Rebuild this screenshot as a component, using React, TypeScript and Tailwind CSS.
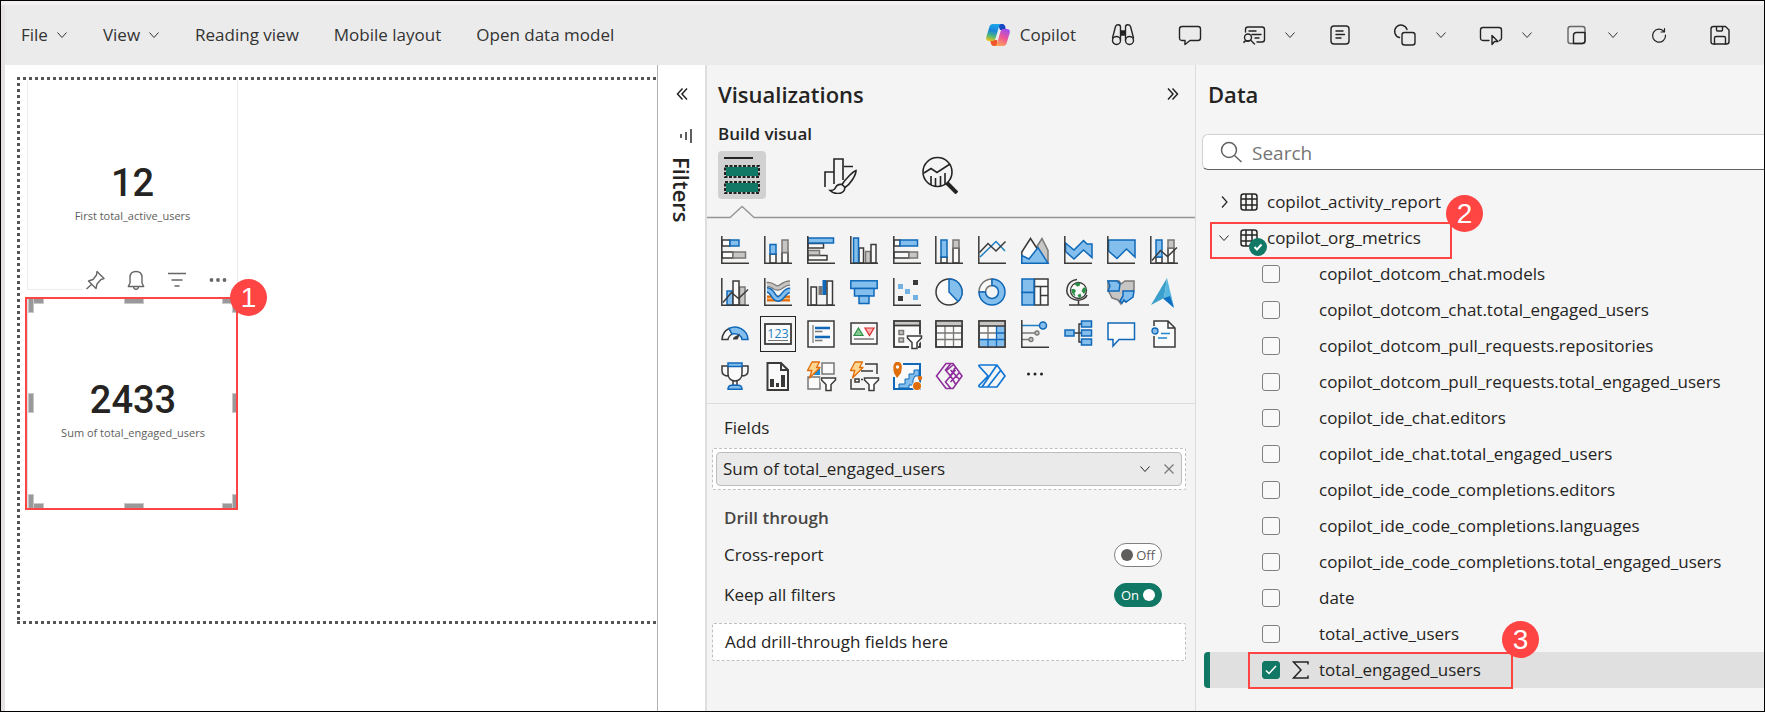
import React, { useState } from "react";

const D = "#3b3a39";
const B = "#0f68b8";
const LB = "#83beec";
const G = "#797775";
const LG = "#c8c6c4";
const W = "#fafafa";

type Kind = "w" | "b" | "g";
const STROKES: Record<Kind, string> = { w: D, b: B, g: G };
const FILLS: Record<Kind, string> = { w: W, b: LB, g: LG };

function Bar({ k, x, y, x2, y2 }: { k: Kind; x: number; y: number; x2: number; y2: number }) {
  return <rect x={x} y={y} width={x2 - x} height={y2 - y} fill={FILLS[k]} stroke={STROKES[k]} strokeWidth="1.5" />;
}

function Axis() {
  return <path d="M.8 0v27.2H28" fill="none" stroke={D} strokeWidth="1.5" />;
}

function Line({ d, c = D, w = 1.5, f = "none" }: { d: string; c?: string; w?: number; f?: string }) {
  return <path d={d} fill={f} stroke={c} strokeWidth={w} />;
}

function Funnel() {
  return (
    <>
      <path d="M13 14.500h17v5l-5 5v6h-9v-6l-3-5z" fill="#f4f4f4" />
      <path d="M15 16h13.500v2L24 22.500V28.500h-5v-6L14.500 18v-2z" fill="#fff" stroke={D} strokeWidth="1.500" />
    </>
  );
}

function Bolt() {
  return <path d="M5 0h7.500L9.500 5.500H13L2.500 16l2.300-7.500H.500z" fill="#ffd590" stroke="#df6d0a" strokeWidth="1.300" strokeLinejoin="round" />;
}

const VISUALS: { name: string; art: React.ReactNode }[] = [
  { name: "Stacked bar chart", art: <><Bar k="w" x={1} y={4} x2={9} y2={10} /><Bar k="b" x={9} y={4} x2={18} y2={10} /><Bar k="w" x={1} y={16} x2={12} y2={22} /><Bar k="g" x={12} y={16} x2={24.5} y2={22} /><Axis /></> },
  { name: "Stacked column chart", art: <><Bar k="w" x={6} y={18} x2={12} y2={27} /><Bar k="b" x={6} y={8.5} x2={12} y2={18} /><Bar k="w" x={18} y={16.5} x2={24} y2={27} /><Bar k="g" x={18} y={4} x2={24} y2={16.5} /><Axis /></> },
  { name: "Clustered bar chart", art: <><Bar k="w" x={1} y={7.5} x2={16.5} y2={12} /><Bar k="b" x={1} y={2} x2={26.5} y2={7} /><Bar k="w" x={1} y={19.5} x2={20} y2={24} /><Bar k="g" x={1} y={14.5} x2={12.5} y2={19} /><Axis /></> },
  { name: "Clustered column chart", art: <><Bar k="w" x={9} y={12} x2={13.5} y2={27} /><Bar k="b" x={3.5} y={2} x2={8.5} y2={27} /><Bar k="g" x={15.5} y={15.5} x2={20.5} y2={27} /><Bar k="w" x={21} y={8.5} x2={26} y2={27} /><Axis /></> },
  { name: "100% stacked bar chart", art: <><Bar k="w" x={1} y={4} x2={7} y2={10} /><Bar k="b" x={7} y={4} x2={24.5} y2={10} /><Bar k="w" x={1} y={16} x2={16} y2={22} /><Bar k="g" x={16} y={16} x2={24.5} y2={22} /><Axis /></> },
  { name: "100% stacked column chart", art: <><Bar k="w" x={6} y={21} x2={12} y2={27} /><Bar k="b" x={6} y={4} x2={12} y2={21} /><Bar k="w" x={18} y={12} x2={24} y2={27} /><Bar k="g" x={18} y={4} x2={24} y2={12} /><Axis /></> },
  { name: "Line chart", art: <><Line d="M2 21 18 5.500l9 9.500" c="#1e7fc0" /><Line d="M1.500 16.500 10 7.500l8 7.500 9.500-9.500" /><Axis /></> },
  { name: "Area chart", art: <><Line d="M15 12 21 2.500l6 12V27H15z" c={G} f={LG} /><Line d="M.800 16 9.500 2.500 19 17v10H.800z" f={W} /><Line d="M.800 19.500 8 23l9-11.500 10 15.700H.800z" c={B} f={LB} /></> },
  { name: "Stacked area chart", art: <><Line d="M1.500 7 10 14l9.500-9.500L23 8h5v13.500l-8.500-7.500L10 23l-8.500-7.500z" c={B} f={LB} /><Axis /></> },
  { name: "100% stacked area chart", art: <><Line d="M1.500 4H28v17l-8.500-8L10 22.500 1.500 15z" c={B} f={LB} /><Axis /></> },
  { name: "Line and stacked column chart", art: <><Bar k="w" x={6} y={21} x2={12} y2={27} /><Bar k="b" x={6} y={4} x2={12} y2={21} /><Bar k="w" x={18} y={12} x2={24} y2={27} /><Bar k="g" x={18} y={4} x2={24} y2={12} /><Line d="m2 24.500 8.500-10 7 6L27 11.500" /><Axis /></> },

  { name: "Line and clustered column chart", art: <><Bar k="b" x={6} y={13} x2={12} y2={27} /><Bar k="g" x={18.5} y={9} x2={24} y2={27} /><Bar k="w" x={12} y={3} x2={18} y2={27} /><Line d="m2 24.500 8.500-10 7 6L27 11.500" /><Axis /></> },
  { name: "Ribbon chart", art: <><Line d="M3 20.500h23" c="#df6d0a" w={6} /><Line d="M3 20.500h23" c="#ffb978" w={1.5} /><Line d="M3 6.500c6-1 7 4 11 3.500S19 5 26 5" c={G} w={5.5} /><Line d="M3 6.500c6-1 7 4 11 3.500S19 5 26 5" c={LG} w={3} /><Line d="M3 12c6 0 6 9 11 9s6-9 12-8.500" c={B} w={6} /><Line d="M3 12c6 0 6 9 11 9s6-9 12-8.500" c={LB} w={3} /><Axis /></> },
  { name: "Waterfall chart", art: <><Bar k="w" x={4} y={9} x2={9.5} y2={27} /><rect x="11.500" y="8" width="4" height="9" fill={G} /><rect x="15.500" y="2" width="4" height="15" fill={B} /><Bar k="w" x={20} y={3} x2={25.5} y2={27} /><Axis /></> },
  { name: "Funnel chart", art: <><Bar k="b" x={0.8} y={2.8} x2={27.2} y2={10.5} /><Bar k="b" x={4.5} y={10.5} x2={24} y2={18} /><Bar k="b" x={9} y={18} x2={19} y2={25.5} /></> },
  { name: "Scatter chart", art: <><g fill={D}><path d="M20 2h5v5h-5zM5 18h5v5H5z" /></g><g fill="#71b1e4"><path d="M5 6h5v5H5zM12 11h5v5h-5zM20 17h5v5h-5z" /></g><Axis /></> },
  { name: "Pie chart", art: <><circle cx="14" cy="14" r="13" fill={W} stroke={D} strokeWidth="1.500" /><Line d="M14 1v13l9 9.500A13 13 0 0 0 14 1z" c={B} f={LB} /></> },
  { name: "Donut chart", art: <><Line d="M1 14A13 13 0 0 1 14 1v6.500A6.500 6.500 0 0 0 7.500 14z" c={G} f={W} /><Line d="M14 1a13 13 0 1 1-13 13h6.500A6.500 6.500 0 1 0 14 7.500z" c={B} f={LB} /></> },
  { name: "Treemap", art: <><Bar k="w" x={13.5} y={1} x2={27} y2={27} /><Line d="M13 8.500h14M19.500 8.500V27M19.500 17.500H27" /><Bar k="b" x={1} y={1} x2={13} y2={14.5} /><Bar k="b" x={1} y={14.5} x2={13} y2={27} /></> },
  { name: "Map", art: <><circle cx="14.500" cy="12.500" r="8" fill={W} stroke={D} strokeWidth="1.300" /><path d="M7.500 11h3l1.500 2-1.500 2 1 3.500C9 17 7 14 7.500 11zM10.500 6c2-1.500 4-1.500 6-1l-1 3-2.500.500zM19 10l2.500-1c1 3 .500 5-1.500 7l-2.500-3zM13.500 17l3-1.500 1 3-2.500 1.500z" fill="#2c9146" /><Line d="M13 1.500C2 3 0 15 7 20c6 4 14 2 16-3M14.500 22v4.500M5 27h20" /></> },
  { name: "Filled map", art: <><Line d="M1 3h11l2 3 4-3h9v8l-4 9-4 4-3-2-2 4-3-4-6-2-4-8z" c={G} f={LG} /><Line d="M1 3h9l3 3-1 7H1l2-5z" c={B} f={LB} /><Line d="M16 13h11l-1 6-4 3-3 2-2-2-2 3-2-2 3-5z" c={B} f={LB} /></> },
  { name: "ArcGIS map", art: <><path d="M17 0 1 27l13-7z" fill="#3a9fcb" /><path d="m17 0 7 29-10-9z" fill="#58b7de" /><path d="m13 20.500 7-2.500 4 12z" fill="#0f6fc0" /></> },

  { name: "Gauge", art: <><Line d="M1 19.500A13 13 0 0 1 8 8.500l3 5.500c-2 1.500-4 3-4 5.500z" f={W} /><Line d="M8 8.500A13 13 0 0 1 27 19.500h-6c0-3-4-7-10-5.500z" c={B} f={LB} /><path d="M12 19.500c0-3 3-3 7-6-1.500 4-2 6-3 6z" fill={D} /></> },
  { name: "Card", art: <><rect x="1" y="4" width="26" height="20" fill={W} stroke={D} strokeWidth="1.800" /><text x="14" y="18" fontSize="12.500" textAnchor="middle" fill="#1e7fc0" fontFamily="Open Sans, sans-serif">123</text><Line d="M4 20.500h20" c={G} w={1} /></> },
  { name: "Multi-row card", art: <><Bar k="w" x={1} y={1} x2={27} y2={27} /><Line d="M6 5v18" c={G} w={1.2} /><Line d="M8 8h15M8 17h15" c={B} w={2.5} /><Line d="M8 11.500h7.500M8 20.500h7.500" c={G} w={1.3} /></> },
  { name: "KPI", art: <><Bar k="w" x={1} y={3} x2={27} y2={24} /><Line d="m8.500 8 4.500 7.500H4z" c="#2c9146" f="#86c893" w={1.2} /><Line d="M15 8h9l-4.500 7.500z" c="#d92c2c" f="#ffb0b0" w={1.2} /><Line d="M4 19h20" c={G} w={1.5} /></> },
  { name: "Slicer", art: <><Bar k="w" x={1} y={1} x2={27} y2={27} /><Bar k="g" x={1} y={1} x2={27} y2={5.5} /><Line d="M1 1h26v26H1zM1 5.500h26" /><Bar k="g" x={6} y={10.5} x2={10.5} y2={14.5} /><Bar k="g" x={6} y={18} x2={10.5} y2={22} /><Funnel /></> },
  { name: "Table", art: <><Bar k="w" x={1} y={1} x2={27} y2={27} /><rect x="1" y="1" width="26" height="5" fill={LG} /><Line d="M1 13h26M1 19.500h26M10 6v21M18.500 6v21" c={G} w={1.3} /><Line d="M1 1h26v26H1zM1 6h26" /></> },
  { name: "Matrix", art: <><Bar k="w" x={1} y={1} x2={27} y2={27} /><rect x="1" y="1" width="26" height="5" fill={LG} /><path d="M1 19.500h17V6h9v21H1z" fill={LB} /><Line d="M1 13h17M10 6v13" c={G} w={1.3} /><Line d="M1 19.500h26M18.500 6v21M18 13h9M10 19.500V27" c={B} w={1.3} /><Line d="M1 1h26v26H1zM1 6h26" /></> },
  { name: "Key influencers", art: <><Line d="M1 5.500h17" c="#1e7fc0" /><Line d="M1 13h13M1 19.500h7" c={G} /><circle cx="22" cy="5.500" r="3.500" fill={LB} stroke={B} strokeWidth="1.500" /><circle cx="16" cy="13" r="2" fill={LG} stroke={G} strokeWidth="1.300" /><circle cx="10" cy="19.500" r="2" fill={LG} stroke={G} strokeWidth="1.300" /><Axis /></> },
  { name: "Decomposition tree", art: <><Line d="M10 13h7M17.500 4H15v18h2.500" /><Bar k="b" x={1} y={10} x2={10} y2={16} /><Bar k="b" x={17.5} y={1} x2={27.5} y2={7} /><Bar k="b" x={17.5} y={10} x2={27.5} y2={16} /><Bar k="b" x={17.5} y={19} x2={27.5} y2={25} /></> },
  { name: "Q&A", art: <Line d="M1 3h26.500v16.500H12L6 26v-6.500H1z" c={B} f={W} /> },
  { name: "Smart narrative", art: <><path d="M4 1h14l7 7v19H4z" fill={W} /><Line d="M4 6V1h14l7 7v19H4V16M18 1v7h7" /><circle cx="5" cy="11" r="3" fill={LB} stroke={B} strokeWidth="1.300" /><Line d="M11 13.500h9M8 18h9" c="#1e88d0" w={1.3} /></> },

  { name: "Metrics", art: <><Line d="M7 4H1v5c0 4 4 5 7 5M21 4h6v5c0 4-4 5-7 5M7 4h14v8c0 5-4 7-7 7s-7-2-7-7zM12 19v4.500h4V19" f={W} /><Bar k="b" x={7} y={1} x2={21} y2={4.5} /><Line d="M7 27.200c0-3 2-4 4-4h6c2 0 4 1 4 4z" c={B} f={LB} /></> },
  { name: "Paginated report", art: <><Line d="M3.500 1H17l7 7v20H3.500zM17 1v7h7" f={W} w={2} /><path d="M6 17h4v8H6zM12 21h3v4h-3zM17 13h4v12h-4z" fill={D} /></> },
  { name: "Button slicer", art: <><Line d="M15 1h12v11H15zM1 15h12v12H1z" c={G} f={W} /><path d="M8 7h5v6H7z" fill="#1e88d0" /><Bolt /><Funnel /></> },
  { name: "List slicer", art: <><Line d="M15 2h12v10M1 17v10h14M11 9h12M14 17.500h-3M5 17h4v3H5z" /><Bolt /><Funnel /></> },
  { name: "Azure map", art: <><Line d="M10 2h17v25H1V15" c={B} f={W} w={2} /><path d="M26 8h-5v4h-5v5h-4v5H6v4h10v-3h4v-5l2-4h4z" fill={LB} stroke={B} strokeWidth="1" /><path d="M3 0h3c4 2 3 6 2 11l-4 5-3-5C0 5 0 2 3 0z" fill="#df6d0a" /><circle cx="4.500" cy="5" r="1.700" fill={W} /><circle cx="27" cy="16" r="2.200" fill="#df6d0a" /><circle cx="24" cy="24" r="5" fill="#f4f4f4" /><circle cx="24" cy="24" r="4" fill="#df6d0a" /></> },
  { name: "Power Apps", art: <Line d="M11 1.500h7L27 14l-9 12.500h-7L1.500 14zM15.500 2 10.500 8l5 6-5 6 5 6M18 3l-7 6M20.500 5 15.500 14l5 8M15.500 14l5-6M15.500 8l9.500 10M15.500 20 25 10" c="#8e2f9b" w={1.6} /> },
  { name: "Power Automate", art: <Line d="M1 4q-.500-1 1-1h17l8 11-8 11H2q-1.500 0-1-1.500L10 14zM19 3 4 25M23 8 10 24.500" c="#0f76d6" w={1.7} /> },
];

function ChevDown({ className = "" }: { className?: string }) {
  return (
    <svg viewBox="0 0 12 12" className={`size-3 ${className}`} fill="none" stroke="currentColor" strokeWidth="1" aria-hidden="true">
      <path d="M1.500 3.500 6 8.500l4.500-5" />
    </svg>
  );
}

function ToolIcon({ label, children }: { label: string; children: React.ReactNode }) {
  return (
    <button type="button" aria-label={label} className="block text-[#242424]">
      <svg viewBox="0 0 24 24" className="size-6" fill="none" stroke="currentColor" strokeWidth="1.400" strokeLinejoin="round" strokeLinecap="round" aria-hidden="true">
        {children}
      </svg>
    </button>
  );
}

function ToolGroup({ label, children }: { label: string; children: React.ReactNode }) {
  return (
    <div className="mr-8 flex items-center gap-[18px]">
      <ToolIcon label={label}>{children}</ToolIcon>
      <button type="button" aria-label={`${label} options`} className="text-[#333]"><ChevDown /></button>
    </div>
  );
}

function CopilotLogo() {
  return (
    <svg viewBox="0 0 24 24" className="size-6" aria-hidden="true">
      <defs>
        <linearGradient id="cpA" x1=".5" y1="0" x2=".3" y2="1">
          <stop offset="0" stopColor="#19a5e8" /><stop offset=".4" stopColor="#1a84d8" /><stop offset=".7" stopColor="#4bb67c" /><stop offset="1" stopColor="#e9c31c" />
        </linearGradient>
        <linearGradient id="cpB" x1=".7" y1="0" x2=".3" y2="1">
          <stop offset="0" stopColor="#a04df0" /><stop offset=".5" stopColor="#ee5593" /><stop offset="1" stopColor="#ffa456" />
        </linearGradient>
      </defs>
      <path d="M12 1h4.500c1.500 0 2.200 1 2.600 2.300L20 7h-6z" fill="#1748c4" />
      <path d="M12 23H8c-2 0-2.500-1-3-2.500L4 17h7z" fill="#f0562c" />
      <path d="M7 1h8c-1.200.500-1.700 1.500-2 2.500L9.500 15.500C9 17 8.200 18 6.500 18H3C.800 18-.300 16.500.300 14L3.500 3.500C4 2 5 1 7 1z" fill="url(#cpA)" />
      <path d="M17 23H9c1.200-.500 1.700-1.500 2-2.500L14.500 8.500C15 7 15.800 6 17.500 6H21c2.200 0 3.300 1.500 2.700 4l-3.200 10.500C20 22 19 23 17 23z" fill="url(#cpB)" />
    </svg>
  );
}

function Toolbar() {
  return (
    <header className="flex h-[60px] shrink-0 items-center bg-[#ebebeb] pr-8 pl-4 text-[#333]">
      <nav className="flex items-center gap-[35px] whitespace-nowrap">
        <button type="button" className="flex items-center gap-2">File <ChevDown /></button>
        <button type="button" className="flex items-center gap-2">View <ChevDown /></button>
        <button type="button">Reading view</button>
        <button type="button">Mobile layout</button>
        <button type="button">Open data model</button>
      </nav>
      <div className="ml-auto flex items-center">
        <button type="button" className="mr-[35px] flex items-center gap-2.5"><CopilotLogo /> Copilot</button>
        <div className="mr-[43px]">
          <ToolIcon label="Find">
            <path d="M9.500 9.500V4c0-3-4-3-5-.500L1.500 15M14.500 9.500V4c0-3 4-3 5-.500l3 11.500M9.500 9.500V17M14.500 9.500V17" />
            <circle cx="5.500" cy="17.500" r="4" /><circle cx="18.500" cy="17.500" r="4" />
            <path d="M10 8h4v4h-4z" fill="currentColor" />
          </ToolIcon>
        </div>
        <div className="mr-10">
          <ToolIcon label="Comment">
            <path d="M4 3.500h16q2.500 0 2.500 2.500v9q0 2.500-2.500 2.500h-8L7 21.500v-4H4Q1.500 17.500 1.500 15V6Q1.500 3.500 4 3.500z" />
          </ToolIcon>
        </div>
        <ToolGroup label="Explore">
          <path d="M3.500 9V6.500Q3.500 4 6 4h14q2.500 0 2.500 2.500v10q0 2.500-2.500 2.500h-5M7 8h7M10 11.500h9M13 15h4" />
          <circle cx="6" cy="14.500" r="3.500" /><path d="m8.500 17 4 4M2 19.500c0-1 1-1.500 2-1.500h3" />
        </ToolGroup>
        <div className="mr-[41px]">
          <ToolIcon label="Text box">
            <rect x="3" y="3" width="18" height="18" rx="3" /><path d="M8 8h7M8 11.500h8.500M8 15h5" />
          </ToolIcon>
        </div>
        <ToolGroup label="Shapes">
          <path d="M6.500 14.500A6.300 6.300 0 1 1 14 6.500" /><rect x="9" y="9.500" width="13" height="12.500" rx="2.500" />
        </ToolGroup>
        <ToolGroup label="Buttons">
          <path d="M10 17.500H4Q1.500 17.500 1.500 15V7Q1.500 4.500 4 4.500h16q2.500 0 2.500 2.500v8q0 2-2 2.500" /><path d="M13 12.500v9l2.500-3h3.500z" />
        </ToolGroup>
        <div className="-mr-1">
          <ToolGroup label="Visual interactions">
            <rect x="3" y="3.500" width="17" height="17" rx="2.500" stroke="#666" /><path d="M8.500 20.500v-8q0-3 3-3H20v8q0 3-3 3z" />
          </ToolGroup>
        </div>
        <div className="mr-[37px]">
          <ToolIcon label="Refresh">
            <path d="M17 8.500A6.500 6.500 0 1 0 18.500 12M17.500 5.500v3.500H14" strokeWidth="1.200" />
          </ToolIcon>
        </div>
        <ToolIcon label="Save">
          <path d="M5.500 3.500h12l3.500 3.500v11.500q0 2.500-2.500 2.500h-13Q3 21 3 18.500V6Q3 3.500 5.500 3.500z" /><path d="M6.500 21v-6q0-1.500 1.500-1.500h8q1.500 0 1.500 1.500v6M8.500 4v3q0 1 1 1h4q1 0 1-1V4" />
        </ToolIcon>
      </div>
    </header>
  );
}

function Badge({ n, className }: { n: number; className: string }) {
  return (
    <span className={`absolute z-10 flex size-[37px] items-center justify-center rounded-full bg-[#ff4444] font-['Liberation_Sans',Arial,sans-serif] text-[28px] leading-none text-white ${className}`}>
      {n}
    </span>
  );
}

function Stat({ value, label }: { value: string; label: string }) {
  return (
    <div className="flex flex-col items-center pt-20">
      <span className="font-[Roboto,sans-serif] text-[38px] leading-[46px] font-medium text-[#252423]">{value}</span>
      <span className="text-[11px] leading-5 whitespace-nowrap text-[#605e5c]">{label}</span>
    </div>
  );
}

const HANDLE = "absolute border border-[#c8c8c8] bg-[#999]";

function Canvas() {
  return (
    <main className="min-w-0 flex-1 bg-white pt-3 pl-3">
      <div className="h-[3px] bg-[repeating-linear-gradient(90deg,#555_0_3px,transparent_3px_6px)]" />
      <div className="flex h-[541px]">
        <div className="w-[3px] shrink-0 bg-[repeating-linear-gradient(180deg,transparent_0_3px,#555_3px_6px)]" />
        <div className="ml-[7px] flex w-[211px] flex-col gap-[7px]">
          <section className="h-[210px] border border-t-0 border-[#ececec]">
            <Stat value="12" label="First total_active_users" />
          </section>
          <section className="relative h-[213px] border-l border-[#dfe3e3]">
            <Stat value="2433" label="Sum of total_engaged_users" />
            <i className={`${HANDLE} top-0 left-0 h-[7px] w-4`} /><i className={`${HANDLE} top-0 left-0 h-4 w-[6px]`} />
            <i className={`${HANDLE} top-0 right-0 h-[7px] w-4`} /><i className={`${HANDLE} top-0 right-0 h-4 w-[6px]`} />
            <i className={`${HANDLE} bottom-0 left-0 h-[7px] w-4`} /><i className={`${HANDLE} bottom-0 left-0 h-4 w-[6px]`} />
            <i className={`${HANDLE} right-0 bottom-0 h-[7px] w-4`} /><i className={`${HANDLE} right-0 bottom-0 h-4 w-[6px]`} />
            <i className={`${HANDLE} top-0 left-24 h-[7px] w-5`} /><i className={`${HANDLE} bottom-0 left-24 h-[7px] w-5`} />
            <i className={`${HANDLE} top-24 left-0 h-5 w-[6px]`} /><i className={`${HANDLE} top-24 right-0 h-5 w-[6px]`} />
            <div className="absolute -top-[29px] right-2 flex gap-[17px] bg-white text-[#666]">
              <button type="button" aria-label="Pin">
                <svg viewBox="0 0 24 24" className="size-6" fill="none" stroke="currentColor" strokeWidth="1.400" strokeLinejoin="round" aria-hidden="true"><path d="m14 3.500 7 7-3 1-4 4.500-1 4.500-7.500-7.500 4.500-1.500 3.500-4.500zM8.500 16.500 3.500 21" /></svg>
              </button>
              <button type="button" aria-label="Alert">
                <svg viewBox="0 0 24 24" className="size-6" fill="none" stroke="currentColor" strokeWidth="1.400" strokeLinejoin="round" aria-hidden="true"><path d="M12 3.500c-4 0-6 2.500-6 6V15l-1.700 3.500h15.400L18 15V9.500c0-3.500-2-6-6-6zM9.500 19c.500 3 4.500 3 5 0" /></svg>
              </button>
              <button type="button" aria-label="Filter">
                <svg viewBox="0 0 24 24" className="size-6" fill="none" stroke="currentColor" strokeWidth="1.500" aria-hidden="true"><path d="M3 5.500h18M6.500 12h11M9.500 18h5" /></svg>
              </button>
              <button type="button" aria-label="More options">
                <svg viewBox="0 0 24 24" className="size-6" fill="currentColor" aria-hidden="true"><circle cx="5.500" cy="12" r="1.900" /><circle cx="12" cy="12" r="1.900" /><circle cx="18.500" cy="12" r="1.900" /></svg>
              </button>
            </div>
            <div className="pointer-events-none absolute top-0 right-0 bottom-0 -left-[3px] border-2 border-[#ff4444]" />
            <Badge n={1} className="-top-[18px] -right-[29px]" />
          </section>
        </div>
      </div>
      <div className="h-[3px] bg-[repeating-linear-gradient(90deg,#555_0_3px,transparent_3px_6px)]" />
    </main>
  );
}

function DoubleChevron({ flip = false }: { flip?: boolean }) {
  return (
    <svg viewBox="0 0 12 14" className={`h-3.5 w-3 ${flip ? "rotate-180" : ""}`} fill="none" stroke="#252423" strokeWidth="1.500" aria-hidden="true">
      <path d="M6.500 1.500 1.500 7l5 5.500M11 1.500 6 7l5 5.500" />
    </svg>
  );
}

function FiltersRail() {
  return (
    <aside className="flex w-12 shrink-0 flex-col items-center border-l border-[#b0b0b0] bg-white pt-[22px]">
      <button type="button" aria-label="Expand filters"><DoubleChevron /></button>
      <svg viewBox="0 0 12 14" className="mt-7 ml-2 h-3.5 w-3" fill="none" stroke="#444" strokeWidth="1.700" aria-hidden="true">
        <path d="M1 5v4M6 3v8M11 0v14" />
      </svg>
      <span className="mt-3.5 text-[22px] leading-6 font-semibold text-[#252423] [writing-mode:vertical-rl]">Filters</span>
    </aside>
  );
}

function Toggle({ id, label, initial }: { id: string; label: string; initial: boolean }) {
  const [on, setOn] = useState(initial);
  return (
    <div className="flex h-10 items-center justify-between pr-6 pl-3">
      <label htmlFor={id}>{label}</label>
      <span className={`relative flex h-6 w-12 items-center justify-between rounded-full border px-[6px] text-[13px] leading-none ${on ? "border-[#117865] bg-[#117865] text-white" : "border-[#808080] bg-white text-[#605e5c]"}`}>
        <input id={id} type="checkbox" role="switch" checked={on} onChange={() => setOn(!on)} className="absolute inset-0 size-full cursor-pointer opacity-0" />
        {on && <span>On</span>}
        <span className={`size-3 rounded-full ${on ? "bg-white" : "bg-[#605e5c]"}`} />
        {!on && <span>Off</span>}
      </span>
    </div>
  );
}

function Visualizations() {
  return (
    <section className="w-[490px] shrink-0 border-l-2 border-[#dedede] bg-[#f4f4f4]">
      <div className="flex items-center justify-between pt-[13px] pr-4 pl-[11px]">
        <h2 className="text-[22px] leading-8 font-semibold text-[#252423]">Visualizations</h2>
        <button type="button" aria-label="Collapse visualizations"><DoubleChevron flip /></button>
      </div>
      <h3 className="mt-3 pl-[11px] leading-6 font-semibold text-[#252423]">Build visual</h3>
      <div className="mt-[5px] flex gap-[51px] pl-[11px]">
        <button type="button" aria-label="Build visual" className="flex size-12 items-center justify-center rounded-sm bg-[#d1d1d1]">
          <svg viewBox="0 0 36 38" className="h-[38px] w-9" aria-hidden="true">
            <path d="M0 2h29" stroke="#252423" strokeWidth="2" />
            <rect x="1" y="10" width="34" height="11" fill="#117865" stroke="#d1d1d1" strokeWidth="2" />
            <rect x="1" y="10" width="34" height="11" fill="none" stroke="#252423" strokeWidth="2" strokeDasharray="3 1.5" />
            <rect x="1" y="26" width="34" height="11" fill="#117865" stroke="#d1d1d1" strokeWidth="2" />
            <rect x="1" y="26" width="34" height="11" fill="none" stroke="#252423" strokeWidth="2" strokeDasharray="3 1.5" />
          </svg>
        </button>
        <button type="button" aria-label="Format visual" className="flex size-12 items-center justify-center">
          <svg viewBox="0 0 36 38" className="h-[38px] w-9" fill="none" stroke="#252423" strokeWidth="1.600" aria-hidden="true">
            <path d="M2 31V16h8.500M11 28V3h9v21M21 10.500h9" />
            <path d="M33 14.500c-3 1-11 9-14 14l3 3c5-3 11-12 11-17zM19 28.500c-5-1-6 2-7 4-1 2-3 2-5 2 4 4 14 5 15-3z" fill="#f4f4f4" />
          </svg>
        </button>
        <button type="button" aria-label="Analytics" className="flex size-12 items-center justify-center">
          <svg viewBox="0 0 36 38" className="h-[38px] w-9" fill="none" stroke="#252423" strokeWidth="1.600" aria-hidden="true">
            <circle cx="15.500" cy="16" r="14.500" />
            <path d="m2 17 7-4.500 6 4L28 8M9 20v9M13.500 22v8.500M18.500 20v10.500M23 17v11.500" />
            <path d="m25 27 10 10" strokeWidth="4" />
          </svg>
        </button>
      </div>
      <svg viewBox="0 0 487 14" preserveAspectRatio="none" className="mt-[6px] block h-3.5 w-full" fill="none" stroke="#979593" strokeWidth="1.300" aria-hidden="true">
        <path d="M0 12.500h23L35 1.500l12 11h440" />
      </svg>
      <div className="mt-2.5 grid grid-cols-11 pr-[10px] pl-[7px]">
        {VISUALS.map((v) => (
          <button key={v.name} type="button" aria-label={v.name} className="flex h-[42px] items-center justify-center">
            <span className={v.name === "Card" ? "flex size-9 items-center justify-center border border-[#252423]" : "flex size-9 items-center justify-center"}>
              <svg viewBox="0 0 28 28" className="size-7 overflow-visible" aria-hidden="true">{v.art}</svg>
            </span>
          </button>
        ))}
        <button type="button" aria-label="More visuals" className="flex h-[42px] items-center justify-center">
          <svg viewBox="0 0 28 28" className="size-7" fill="#252423" aria-hidden="true"><circle cx="7.500" cy="12" r="1.500" /><circle cx="14" cy="12" r="1.500" /><circle cx="20.500" cy="12" r="1.500" /></svg>
        </button>
      </div>
      <div className="mt-[6px] border-t border-[#dcdcdc] pt-3 pr-[9px] pl-[5px] text-[#252423]">
        <h4 className="pl-3 leading-6">Fields</h4>
        <div className="mt-2 rounded-xs border border-dashed border-[#c0c0c0] bg-white p-[3px]">
          <div className="flex h-[34px] items-center rounded-sm border border-[#bdbdbd] bg-[#eaeaea] pr-[6px] pl-[6px]">
            <span className="flex-1">Sum of total_engaged_users</span>
            <button type="button" aria-label="Field options"><ChevDown /></button>
            <button type="button" aria-label="Remove field" className="ml-3">
              <svg viewBox="0 0 12 12" className="size-3" stroke="#777" strokeWidth="1.200" aria-hidden="true"><path d="m1.500 1.500 9 9m0-9-9 9" /></svg>
            </button>
          </div>
        </div>
        <h4 className="mt-4 mb-[5px] pl-3 leading-6 font-semibold text-[#484644]">Drill through</h4>
        <Toggle id="cross" label="Cross-report" initial={false} />
        <Toggle id="keep" label="Keep all filters" initial />
        <button type="button" className="mt-2 flex h-[38px] w-full items-center rounded-xs border border-dashed border-[#c0c0c0] bg-white pl-3">
          Add drill-through fields here
        </button>
      </div>
    </section>
  );
}

function TableGlyph() {
  return (
    <svg viewBox="0 0 18 18" className="size-[18px]" fill="none" stroke="#252423" strokeWidth="1.500" aria-hidden="true">
      <rect x="1" y="1" width="16" height="16" rx="2.500" />
      <path d="M6 1v16M12 1v16M1 6h16M1 12h16" />
    </svg>
  );
}

const FIELDS = [
  "copilot_dotcom_chat.models",
  "copilot_dotcom_chat.total_engaged_users",
  "copilot_dotcom_pull_requests.repositories",
  "copilot_dotcom_pull_requests.total_engaged_users",
  "copilot_ide_chat.editors",
  "copilot_ide_chat.total_engaged_users",
  "copilot_ide_code_completions.editors",
  "copilot_ide_code_completions.languages",
  "copilot_ide_code_completions.total_engaged_users",
  "date",
  "total_active_users",
];

const BOX = "size-[18px] shrink-0 appearance-none rounded-[3px] border border-[#808080] bg-[#f9f9f9] checked:border-[#117865] checked:bg-[#117865]";

function DataPane() {
  return (
    <section className="w-[569px] shrink-0 overflow-hidden border-l border-[#dcdcdc] bg-[#f5f5f5] text-[#252423]">
      <h2 className="pt-[13px] pl-3 text-[22px] leading-8 font-semibold">Data</h2>
      <div className="mt-6 ml-[6px] flex h-9 items-center gap-2.5 rounded-l-md border border-r-0 border-[#d1d1d1] border-b-[#616161] bg-white pl-[17px]">
        <svg viewBox="0 0 22 22" className="size-[22px] shrink-0" fill="none" stroke="#616161" strokeWidth="1.500" aria-hidden="true">
          <circle cx="9" cy="9" r="7.500" /><path d="m14.500 14.500 7 6.500" />
        </svg>
        <input aria-label="Search" placeholder="Search" className="min-w-0 flex-1 bg-transparent pt-px text-[19px] leading-7 outline-none placeholder:text-[#757575]" />
      </div>
      <ul className="mt-3.5">
        <li>
          <button type="button" className="flex h-9 items-center pl-[22px]">
            <svg viewBox="0 0 12 12" className="size-3" fill="none" stroke="currentColor" strokeWidth="1.200" aria-hidden="true"><path d="m4 .500 5 5.500-5 5.500" /></svg>
            <span className="ml-2.5"><TableGlyph /></span>
            <span className="ml-[9px]">copilot_activity_report</span>
          </button>
        </li>
        <li className="relative">
          <button type="button" className="flex h-9 items-center pl-[22px]">
            <ChevDown />
            <span className="relative ml-2.5">
              <TableGlyph />
              <span className="absolute top-[9px] left-[9px] flex size-[18px] items-center justify-center rounded-full bg-[#117865]">
                <svg viewBox="0 0 10 10" className="size-2.5" fill="none" stroke="#fff" strokeWidth="2" aria-hidden="true"><path d="m1.500 5 2.500 2.500L8.500 2.500" /></svg>
              </span>
            </span>
            <span className="ml-[9px]">copilot_org_metrics</span>
          </button>
          <div className="pointer-events-none absolute top-0.5 left-3.5 h-[37px] w-[242px] border-2 border-[#ff4444]" />
          <Badge n={2} className="-top-[25px] left-[250px]" />
        </li>
        {FIELDS.map((f) => (
          <li key={f}>
            <label className="flex h-9 items-center pl-[66px]">
              <input type="checkbox" className={BOX} />
              <span className="ml-[39px] whitespace-nowrap">{f}</span>
            </label>
          </li>
        ))}
        <li className="relative ml-2 rounded-l-[4px] border-l-[6px] border-[#117865] bg-[#e0e0e0]">
          <label className="flex h-9 items-center pl-[52px]">
            <span className="relative flex">
              <input type="checkbox" defaultChecked className={BOX} />
              <svg viewBox="0 0 18 18" className="pointer-events-none absolute inset-0 size-[18px]" fill="none" stroke="#fff" strokeWidth="1.500" aria-hidden="true"><path d="m4 9.500 3 3L14 5" /></svg>
            </span>
            <svg viewBox="0 0 17 18" className="ml-3 h-[18px] w-[17px]" fill="none" stroke="#252423" strokeWidth="1.500" aria-hidden="true"><path d="M16 3.500V1H1.500L9 9l-7.500 8H16v-2.500" /></svg>
            <span className="ml-2.5">total_engaged_users</span>
          </label>
          <div className="pointer-events-none absolute top-0 left-[38px] h-[37px] w-[265px] border-2 border-[#ff4444]" />
          <Badge n={3} className="-top-[31px] left-[292px]" />
        </li>
      </ul>
    </section>
  );
}

export default function App() {
  return (
    <div className="flex min-h-screen flex-col border border-black bg-[#f3f1f2] pt-1 font-['Open_Sans','Noto_Sans',sans-serif] text-[17px] leading-6">
      <div className="flex flex-1 flex-col border-l-4 border-[#e6e2e3]">
        <Toolbar />
        <div className="flex flex-1">
          <Canvas />
          <FiltersRail />
          <Visualizations />
          <DataPane />
        </div>
      </div>
    </div>
  );
}
